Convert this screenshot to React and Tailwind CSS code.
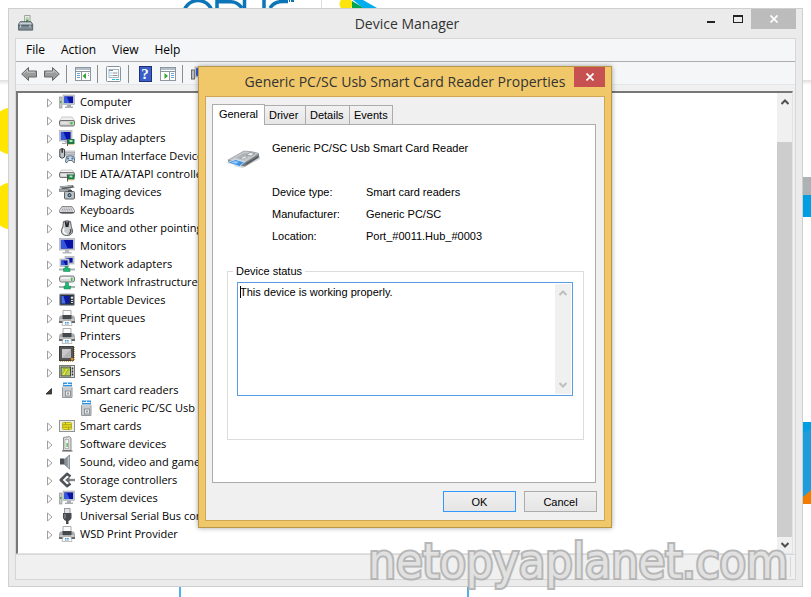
import React from "react";
import clsx from "clsx";

/* ---------- small 16x16 device icons ---------- */

function Icon({ children, className }) {
  return (
    <svg viewBox="0 0 16 16" className={clsx("h-4 w-4 shrink-0", className)} aria-hidden="true">
      {children}
    </svg>
  );
}

function Screen({ x, y, w, h }) {
  return (
    <g>
      <rect x={x} y={y} width={w} height={h} fill="#c9cdd1" stroke="#a2a6aa" strokeWidth="0.6" />
      <rect x={x + 1.4} y={y + 1.4} width={w - 2.8} height={h - 2.8} fill="#0712a6" />
      <path d={`M${x + 1.4} ${y + 1.4}h${w * 0.2}l${w * 0.25} ${h - 2.8}h-${w * 0.45}z`} fill="#3557dc" />
    </g>
  );
}

function Chip({ x, y }) {
  return (
    <g>
      <rect x={x} y={y} width="7" height="5" fill="#1c7a43" />
      <rect x={x + 2} y={y + 1} width="3" height="2" fill="#b5dfc2" />
      <path d={`M${x + 1} ${y + 5.5}h5`} stroke="#c9a22c" strokeDasharray="1 1" />
      <path d={`M${x} ${y}v7`} stroke="#555" />
    </g>
  );
}

function Computer() {
  return (
    <Icon>
      <rect x="0.5" y="3" width="2.5" height="11" fill="#c6c9cc" stroke="#85898d" strokeWidth="0.6" />
      <rect x="1" y="7" width="1.5" height="2" fill="#36b336" />
      <Screen x={4} y={1} w={11.5} h={9.5} />
      <path d="M8 11h4v1.5H8zM6 12.5h8V14H6z" fill="#a9adb1" />
    </Icon>
  );
}

function Disk() {
  return (
    <Icon>
      <path d="M3 5h10l2.5 4H0.5z" fill="#f0f0f0" stroke="#b0b0b0" strokeWidth="0.6" />
      <rect x="0.5" y="8.5" width="15" height="5.5" rx="1.5" fill="#cfcfcf" stroke="#6f6f6f" />
      <rect x="11.5" y="10" width="2" height="2.5" fill="#37c837" />
      <path d="M2 11h7" stroke="#f5f5f5" />
    </Icon>
  );
}

function Display() {
  return (
    <Icon>
      <Screen x={0.5} y={0.5} w={12.5} h={10.5} />
      <path d="M5 11h4v2H3v1h5" fill="#a9adb1" />
      <Chip x={8.5} y={9} />
    </Icon>
  );
}

function Hid() {
  return (
    <Icon>
      <rect x="6" y="3" width="10" height="5" fill="#d9dcdf" stroke="#a5a9ad" strokeWidth="0.6" />
      <path d="M6.5 4.7h9M6.5 6.3h9" stroke="#73777b" strokeDasharray="1 1" />
      <path d="M0.8 1.5q2.4-2 4.7 0v7.5q-2.3 2.5-4.7 0z" fill="#c3c6c9" stroke="#3f4347" />
      <path d="M3.2 0.8v4" stroke="#222" strokeWidth="1.4" />
      <path d="M7.5 8.5q3.8-1.5 7.5 0l1 5.5q-1.2 2-2.8-1.5h-3.7q-1.6 3.5-3 1.5z" fill="#c8d4de" stroke="#5d6e7e" />
      <circle cx="9" cy="10.5" r="1" fill="#2d6fb5" />
      <circle cx="13.4" cy="10.5" r="1" fill="#2d6fb5" />
    </Icon>
  );
}

function Ide() {
  return (
    <Icon>
      <path d="M2.5 4h10.5l2.5 3H0.5z" fill="#f4f4f4" stroke="#b0b0b0" strokeWidth="0.6" />
      <rect x="0.5" y="6.5" width="15" height="5" rx="1.5" fill="#cfcfcf" stroke="#777" />
      <path d="M2 9h5" stroke="#fff" />
      <Chip x={8.5} y={8.5} />
    </Icon>
  );
}

function Imaging() {
  return (
    <Icon>
      <path d="M0.5 2.5l13-1.5 2 2.5-12 2z" fill="#5b6063" />
      <path d="M2 3.2l11-1.4" stroke="#bcc1c4" />
      <rect x="0.5" y="5" width="11" height="2.5" fill="#a7acb0" stroke="#666a6e" strokeWidth="0.6" />
      <rect x="5.5" y="7.5" width="10" height="7.5" rx="1" fill="#b4babf" stroke="#5b6165" />
      <rect x="9" y="6" width="4" height="2" fill="#4b5054" />
      <circle cx="10.5" cy="11.2" r="2.6" fill="#34434f" stroke="#eceff1" strokeWidth="0.8" />
      <circle cx="10.5" cy="11.2" r="1" fill="#6eb4e0" />
    </Icon>
  );
}

function Keyboard() {
  return (
    <Icon>
      <path d="M3 4.5h10l2.5 4v1.5q-1 1.5-2 1.5H2.5q-1 0-2-1.5V8.5z" fill="#e0e0e3" stroke="#8b8b90" />
      <path d="M1 10h14v1H1z" fill="#55555c" />
      <path d="M3.5 6h9.5M3 7.5h10.5M2.5 9h11.5" stroke="#84848c" strokeDasharray="1 0.8" strokeWidth="0.8" />
    </Icon>
  );
}

function Mouse() {
  return (
    <Icon>
      <path d="M4.5 1.5q0 5-2.2 9q0 5 5.5 5t5.9-4.5q-1.7-4-2.2-9.5q-3.5-1.5-7 0z" fill="#c9cccf" stroke="#5f6367" />
      <path d="M6.5 1.5l1 5.5M9.5 1.5l-1 5.5" stroke="#25282b" strokeWidth="1.8" />
      <path d="M5 8q-2 5 2.5 6" stroke="#fff" strokeWidth="1.5" fill="none" />
      <path d="M11.5 9q1 3-1.5 5" stroke="#53575b" strokeWidth="1.5" fill="none" />
    </Icon>
  );
}

function MonitorIcon() {
  return (
    <Icon>
      <Screen x={0.5} y={0.5} w={15} h={11.5} />
      <path d="M6 12h4v2h2.5v1.5h-9V14H6z" fill="#b3b7ba" />
    </Icon>
  );
}

function NetworkAdapter() {
  return (
    <Icon>
      <Screen x={6} y={0.5} w={9} h={7.5} />
      <Screen x={1} y={3} w={9} h={7.5} />
      <path d="M0 13.5h16" stroke="#aab4b0" strokeWidth="2" />
      <path d="M6 10.5h3v2h2v3H4.5v-3H6z" fill="#21b573" stroke="#12814f" strokeWidth="0.5" />
    </Icon>
  );
}

function NetworkDrive() {
  return (
    <Icon>
      <rect x="0.5" y="2" width="15" height="6" rx="2" fill="#d3d6d6" stroke="#777b7b" />
      <path d="M2 4h9" stroke="#fafafa" strokeWidth="1.5" />
      <rect x="12" y="4" width="1.5" height="3" fill="#37c837" />
      <path d="M0 13h16" stroke="#aab4b0" strokeWidth="2" />
      <path d="M6.5 8.5h3V12h2v3H5v-3h1.5z" fill="#21b573" stroke="#12814f" strokeWidth="0.5" />
    </Icon>
  );
}

function Portable() {
  return (
    <Icon>
      <rect x="0.5" y="2" width="15" height="11.5" rx="1" fill="#606b76" stroke="#a0a6ac" />
      <rect x="1.5" y="3" width="13" height="9.5" fill="#2b3036" />
      <rect x="2.5" y="4" width="8" height="7.5" fill="#0b1ba4" />
      <path d="M2.5 4h2l2 7.5h-4z" fill="#4a70e4" />
      <circle cx="13" cy="5.8" r="1.2" fill="#dfe4e8" />
      <path d="M12 8.5h2M12 10.5h2" stroke="#e3e7ea" />
    </Icon>
  );
}

function Printer() {
  return (
    <Icon>
      <path d="M4 0.5h8V6H4z" fill="#fbfbfb" stroke="#9a9a9a" strokeWidth="0.8" />
      <path d="M1.5 5.5h13q1.5 1 1.5 3v3H0v-3q0-2 1.5-3z" fill="#a9acaf" />
      <path d="M3.5 5h9v4h-9z" fill="#45494c" />
      <path d="M1 10h3M12 10h3" stroke="#e5e7e9" />
      <rect x="0" y="11" width="16" height="2" fill="#65696c" />
      <path d="M4 10.5h8l1 5H3z" fill="#fbfbfb" stroke="#9a9a9a" strokeWidth="0.6" />
      <path d="M6 12.5h4M6 14h4" stroke="#3c91c8" strokeDasharray="1.5 0.7" />
    </Icon>
  );
}

function Processor() {
  return (
    <Icon>
      <path d="M1 15.5h14M15.5 1v14" stroke="#d8a860" strokeDasharray="1 1" />
      <rect x="0.5" y="0.5" width="14" height="14" fill="#555" stroke="#3e3e3e" />
      <rect x="3" y="3" width="9" height="9" fill="#b4b4b4" />
      <path d="M3 3h9l-9 9z" fill="#c9c9c9" />
      <rect x="12" y="12" width="2.5" height="2.5" fill="#d98a22" />
    </Icon>
  );
}

function Sensor() {
  return (
    <Icon>
      <rect x="0.5" y="1.5" width="15" height="12" fill="#e2e4e0" stroke="#777b77" />
      <rect x="2" y="3" width="9.5" height="9" fill="#b9cf6c" stroke="#3f4634" />
      <path d="M3 10l3-3.5-1.5-2 6 0.5-2.5 2-2 4" fill="#f4f01e" stroke="#587f2d" strokeWidth="0.6" />
      <path d="M13.5 3.5v8" stroke="#333" strokeWidth="1.5" strokeDasharray="2 1" />
    </Icon>
  );
}

function CardReader() {
  return (
    <Icon>
      <rect x="4" y="0.5" width="9" height="5" fill="#2f93e0" />
      <path d="M4.5 2.5h8M8.5 0.5v2" stroke="#e7f4fd" />
      <path d="M3.5 5h9.5v10.5H3.5z" fill="#c7cace" stroke="#95999e" />
      <path d="M3.5 5h9.5" stroke="#f2f2f2" />
      <rect x="6.5" y="9" width="5" height="5" fill="#e6e8ea" stroke="#70757a" strokeWidth="0.7" />
      <path d="M9 10.5v2" stroke="#555" />
    </Icon>
  );
}

function SmartCard() {
  return (
    <Icon>
      <rect x="0.5" y="2.5" width="15" height="11" fill="#eceeea" stroke="#92968f" />
      <rect x="3.5" y="4.5" width="9" height="7" rx="1" fill="#f2e21b" stroke="#a5a116" strokeWidth="0.8" />
      <path d="M4 6.8h8M4 9.2h8M6.5 4.5v2M9.5 9.5v2" stroke="#8d8a16" strokeWidth="0.8" />
    </Icon>
  );
}

function SoftwareDevice() {
  return (
    <Icon>
      <path d="M4.5 1.5l6-1 1.5 1.5v12.5H4.5z" fill="#d9dbd9" stroke="#8c908c" />
      <path d="M6 3.5h3.5v9H6z" fill="#f4f5f4" stroke="#9ea29e" strokeWidth="0.7" />
      <rect x="7.5" y="7" width="1.2" height="4" fill="#37b337" />
      <path d="M3 15h10.5" stroke="#555" />
    </Icon>
  );
}

function Speaker() {
  return (
    <Icon>
      <rect x="1" y="4.5" width="4.5" height="6" fill="#4a5056" />
      <path d="M5.5 5.5L10.5 1v14L5.5 10.5z" fill="#8a9097" stroke="#6b7177" strokeWidth="0.7" />
      <path d="M9.5 2.5v11" stroke="#b5c4d0" strokeWidth="1.5" />
    </Icon>
  );
}

function Storage() {
  return (
    <Icon>
      <path d="M11.5 4.5L8 1.8L1.8 8L8 14.2l3.5-2.7" fill="none" stroke="#4e5256" strokeWidth="2.6" strokeLinejoin="round" />
      <path d="M16 8H8" fill="none" stroke="#85898d" strokeWidth="2.4" />
      <path d="M10.5 4.5v7L6 8z" fill="#6a6e72" />
    </Icon>
  );
}

function Usb() {
  return (
    <Icon>
      <rect x="5.5" y="0.5" width="5.5" height="5" fill="#e3e5e7" stroke="#95999d" />
      <path d="M4 5h8.5v5q-1 2.5-3 3v3H7v-3q-2-0.5-3-3z" fill="#46494d" />
      <path d="M6 6v4.5" stroke="#92969a" strokeWidth="1.2" />
    </Icon>
  );
}

const devices = [
  { name: "Computer", icon: Computer },
  { name: "Disk drives", icon: Disk },
  { name: "Display adapters", icon: Display },
  { name: "Human Interface Devices", icon: Hid },
  { name: "IDE ATA/ATAPI controllers", icon: Ide },
  { name: "Imaging devices", icon: Imaging },
  { name: "Keyboards", icon: Keyboard },
  { name: "Mice and other pointing devices", icon: Mouse },
  { name: "Monitors", icon: MonitorIcon },
  { name: "Network adapters", icon: NetworkAdapter },
  { name: "Network Infrastructure Devices", icon: NetworkDrive },
  { name: "Portable Devices", icon: Portable },
  { name: "Print queues", icon: Printer },
  { name: "Printers", icon: Printer },
  { name: "Processors", icon: Processor },
  { name: "Sensors", icon: Sensor },
  { name: "Smart card readers", icon: CardReader, open: true, child: "Generic PC/SC Usb Smart Card Reader" },
  { name: "Smart cards", icon: SmartCard },
  { name: "Software devices", icon: SoftwareDevice },
  { name: "Sound, video and game controllers", icon: Speaker },
  { name: "Storage controllers", icon: Storage },
  { name: "System devices", icon: Computer },
  { name: "Universal Serial Bus controllers", icon: Usb },
  { name: "WSD Print Provider", icon: Printer },
];

function DeviceRow({ device }) {
  const Glyph = device.icon;
  return (
    <li>
      <div className="flex h-[18px] items-center">
        <button className="mr-0.5 flex h-4 w-4 shrink-0 items-center justify-center pt-0.5" aria-label={device.name}>
          <svg viewBox="0 0 8 10" className="h-[10px] w-2" aria-hidden="true">
            {device.open ? (
              <path d="M6.5 2.5V8H1z" fill="#404040" stroke="#262626" strokeWidth="0.8" />
            ) : (
              <path d="M2.5 1l4.5 4L2.5 9z" fill="#fff" stroke="#a0a0a0" />
            )}
          </svg>
        </button>
        <Glyph />
        <span className="ml-[5px]">{device.name}</span>
      </div>
      {device.child && (
        <ul>
          <li className="flex h-[18px] items-center pl-[37px]">
            <Glyph />
            <span className="ml-[5px]">{device.child}</span>
          </li>
        </ul>
      )}
    </li>
  );
}

/* ---------- toolbar ---------- */

function ToolArrow({ flip }) {
  return (
    <svg viewBox="0 0 16 16" className={clsx("h-4 w-4", flip && "-scale-x-100")} aria-hidden="true">
      <path d="M0.7 8L7.5 1.5V5h8v6h-8v3.5z" fill="#9b9b9b" stroke="#666" />
      <path d="M2.5 7.7L6.5 4v2.2H14" stroke="#c9c9c9" fill="none" />
    </svg>
  );
}

function PanelIcon({ left }) {
  return (
    <Icon>
      <rect x="0.5" y="1.5" width="15" height="13" fill="#fff" stroke="#8e979f" />
      <path d="M1 3h14" stroke="#b3bfca" strokeWidth="2" />
      <path d={left ? "M1 5.5h14M6.5 6v8" : "M1 5.5h14M9.5 6v8"} stroke="#8c959e" />
      <path d={left ? "M2 7.5h3M2 9.5h3M2 11.5h3M13 7.5h1M13 9.5h1" : "M11 7.5h3M11 9.5h3M11 11.5h3"} stroke="#6fa3cf" />
      <path d={left ? "M11 7v6L7.5 10z" : "M4.5 7v6l3.5-3z"} fill="#35a335" />
    </Icon>
  );
}

function PropertiesIcon() {
  return (
    <Icon>
      <rect x="0.5" y="0.5" width="14" height="15" rx="1" fill="#fdfdfd" stroke="#8a929a" />
      <rect x="3" y="3.5" width="9.5" height="8" fill="#fff" stroke="#8fa6ba" strokeWidth="0.8" />
      <path d="M3 4.5h4" stroke="#7e93a6" />
      <path d="M4.5 7h1M4.5 9.5h1" stroke="#20a3c9" />
      <path d="M6.5 7h5M6.5 9.5h5" stroke="#8c959e" />
      <path d="M6 13.5h3M10 13.5h3" stroke="#22b8d8" />
    </Icon>
  );
}

function HelpIcon() {
  return (
    <span className="flex h-4 w-[13px] items-center justify-center border border-[#20307d] bg-[#3a5fc8] font-['Liberation_Serif',serif] text-[15px] leading-4 font-bold text-white">
      ?
    </span>
  );
}

function ScanIcon() {
  return (
    <Icon>
      <rect x="0.5" y="4" width="3" height="9" fill="#b9bdc1" stroke="#666" />
      <Screen x={4} y={1} w={12} h={10} />
    </Icon>
  );
}

function Separator() {
  return <span className="mr-px -ml-px h-[18px] w-px bg-[#8d8d8d]" />;
}

function ToolButton({ label, children }) {
  return (
    <button aria-label={label} className="flex h-4 w-4 shrink-0 items-center justify-center">
      {children}
    </button>
  );
}

function Chevron({ down, className }) {
  return (
    <svg viewBox="0 0 8 6" className={clsx("h-[6px] w-2", down && "rotate-180", className)} aria-hidden="true">
      <path d="M0.5 5L4 1.5L7.5 5" fill="none" stroke="currentColor" strokeWidth="2" />
    </svg>
  );
}

function CloseX() {
  return (
    <svg viewBox="0 0 8 8" className="h-2 w-2" aria-hidden="true">
      <path d="M0.5 0.5l7 7M7.5 0.5l-7 7" stroke="#fff" strokeWidth="1.7" />
    </svg>
  );
}

/* ---------- web page showing behind the windows ---------- */

function Backdrop() {
  return (
    <div className="absolute inset-0" aria-hidden="true">
      <div className="absolute inset-x-0 top-20 h-[5px] bg-linear-to-b from-[#dedede] to-white" />
      <div className="absolute top-[107px] left-[-10px] h-12 w-12 rounded-full bg-[#ffe600]" />
      <div className="absolute top-[182px] left-[-10px] h-12 w-12 rounded-full bg-[#ffe600]" />
      <svg viewBox="0 0 240 8" className="absolute top-0 left-[150px] h-2 w-60">
        <g fill="none" stroke="#0a76b8" strokeWidth="3.5">
          <circle cx="48" cy="15" r="14.5" />
          <path d="M67 8V1.8h14q6 0 11 6.2M94.5 0v8M114 0v8M120 8q4-6.5 13-6.5h5" />
        </g>
        <path d="M139 0h1v2h-1zM141 0h3v2h-3z" fill="#0a76b8" />
        <path d="M171.5 0v8" stroke="#dcdcdc" />
        <circle cx="196" cy="4" r="6.5" fill="#fbe50c" />
        <path d="M202 1l12 7h-12z" fill="#00a651" />
        <path d="M203 0h10l14 8h-14z" fill="#00aeef" />
      </svg>
      <div className="absolute top-[177px] right-0 h-[18px] w-2 bg-[#adb2b4]" />
      <div className="absolute top-[195px] right-0 h-[22px] w-2 bg-[#009fe3]" />
      <svg viewBox="0 0 8 82" className="absolute top-[422px] right-0 h-[82px] w-2">
        <path d="M0 0h8v82H0z" fill="#1e9cdc" />
        <path d="M0 0h8v7L0 11z" fill="#009fe3" />
        <path d="M0 75l8-7v14H0z" fill="#f07d00" />
      </svg>
      <div className="absolute bottom-0 left-[179px] h-[10px] w-0.5 bg-[#55aee8]" />
      <div className="absolute bottom-0 left-[467px] h-[10px] w-0.5 bg-[#55aee8]" />
    </div>
  );
}

/* ---------- Device Manager window ---------- */

function DeviceManager() {
  return (
    <section className="absolute top-2 right-2 bottom-[10px] left-2 flex flex-col border border-[#cfcfcf] bg-[#ebebeb] px-1.5 pb-1.5">
      <header className="flex h-[29px] shrink-0 items-start">
        <div className="flex flex-1 pt-1.5 pl-[3px]">
          <svg viewBox="0 0 18 18" className="h-4 w-4" aria-hidden="true">
            <path d="M7.5 0.5h6v8h-6z" fill="#f4f4f4" stroke="#8d9296" />
            <path d="M9 2h3v3H9z" fill="#b9d9a4" />
            <path d="M9 5h3v4H9z" fill="#5b9b50" />
            <path d="M2.5 7.5h12l2 3v6.5H0.5v-6.5z" fill="#7e8c96" stroke="#4f5b64" />
            <path d="M2 8.5h12.5l1 2H1.5z" fill="#c9d1d6" />
            <path d="M1 12h15" stroke="#47535c" />
            <path d="M3 11v3M13.5 11v3" stroke="#d8dee2" />
          </svg>
        </div>
        <h1 className="pt-[5px] text-sm text-[#333]">Device Manager</h1>
        <div className="flex flex-1 justify-end">
          <button aria-label="Minimize" className="flex h-5 w-[27px] items-center justify-center">
            <span className="mt-1.5 h-0.5 w-2 bg-[#222]" />
          </button>
          <button aria-label="Maximize" className="flex h-5 w-[27px] items-center justify-center">
            <span className="h-2 w-[10px] border border-t-2 border-[#222]" />
          </button>
          <button aria-label="Close" className="flex h-5 w-[45px] items-center justify-center bg-[#bcbcbc]">
            <CloseX />
          </button>
        </div>
      </header>

      <div className="flex min-h-0 flex-1 flex-col border border-[#d6d6d6] bg-[#f0f0f0]">
        <nav className="flex h-[23px] shrink-0 items-center gap-4 border-b border-[#adadad] bg-[#f5f6f7] pl-[10px] text-xs">
          <button>File</button>
          <button>Action</button>
          <button>View</button>
          <button>Help</button>
        </nav>

        <div className="flex h-[23px] shrink-0 items-center gap-[7px] border-b border-[#e3e5e8] bg-[#f5f6f7] pt-0.5 pl-[5px]">
          <ToolButton label="Back"><ToolArrow /></ToolButton>
          <ToolButton label="Forward"><ToolArrow flip /></ToolButton>
          <Separator />
          <ToolButton label="Show console tree"><PanelIcon left /></ToolButton>
          <Separator />
          <ToolButton label="Properties"><PropertiesIcon /></ToolButton>
          <Separator />
          <ToolButton label="Help"><HelpIcon /></ToolButton>
          <ToolButton label="Show action pane"><PanelIcon /></ToolButton>
          <Separator />
          <ToolButton label="Scan for hardware changes"><ScanIcon /></ToolButton>
        </div>

        <main className="mt-1.5 mr-0.5 flex min-h-0 flex-1 border-t-2 border-r border-b border-l-2 border-t-[#777] border-r-[#e3e3e3] border-b-[#e3e3e3] border-l-[#777] bg-white">
          <ul className="min-w-0 flex-1 overflow-hidden pl-[23px] leading-4 whitespace-nowrap">
            {devices.map((d) => (
              <DeviceRow key={d.name} device={d} />
            ))}
          </ul>
          <div className="flex w-[15px] flex-col bg-[#f0f0f0] text-[#505050]">
            <button aria-label="Scroll up" className="flex h-[49px] justify-center pt-1.5">
              <Chevron />
            </button>
            <div className="flex-1 bg-[#cdcdcd]" />
            <button aria-label="Scroll down" className="flex h-4 items-center justify-center">
              <Chevron down />
            </button>
          </div>
        </main>

        <footer className="flex h-[25px] shrink-0 items-center justify-end border-t border-[#d7d7d7] pr-1">
          <span className="h-5 w-px bg-[#d7d7d7]" />
        </footer>
      </div>
    </section>
  );
}

/* ---------- Properties dialog ---------- */

function ReaderImage() {
  return (
    <svg viewBox="0 0 34 20" className="h-5 w-[34px]" aria-hidden="true">
      <path d="M6 17l10 2 17-9v-3L20 13z" fill="#b7bbbe" opacity="0.6" />
      <path d="M1 11L17 2q8 0 15 2.5v4L18 17.5 1 14z" fill="#757b80" />
      <path d="M1 11L17 2q8 0 15 2.5L18 13.5z" fill="#c4c8cb" stroke="#9a9fa4" strokeWidth="0.6" />
      <path d="M9 9l8-5 4 1-8 5z" fill="#aeb3b7" />
      <path d="M19 6l4-2.5 5 1-4 2.5z" fill="#eef0f1" stroke="#7a7f84" strokeWidth="0.7" />
      <path d="M13 9.5l4-2.5 4 1-4 2z" fill="#dfe2e4" stroke="#8a8f94" strokeWidth="0.5" />
      <path d="M0.5 13.5l8-3 9 2.5-5 4.5z" fill="#3f92e6" stroke="#e5f0fa" strokeWidth="0.8" />
      <path d="M4 13.5l4-1.5 4 1-3 1.8z" fill="#9dcbf5" />
      <path d="M19 15l12-7" stroke="#4f5458" strokeWidth="1.2" />
    </svg>
  );
}

function PropertiesDialog() {
  const tab = "-ml-px h-5 border border-[#acacac] bg-linear-to-b from-[#f2f2f2] to-[#e6e6e6] px-1 text-left";
  return (
    <section
      role="dialog"
      aria-labelledby="dialog-title"
      className="absolute top-[66px] left-[198px] flex h-[462px] w-[414px] flex-col border border-[#b8964a] bg-[#f0c869] px-1.5 pb-1.5 shadow-[0_0_5px_rgba(0,0,0,0.35)]"
    >
      <header className="relative flex h-[29px] shrink-0 items-center justify-center">
        <h2 id="dialog-title" className="text-sm whitespace-nowrap text-[#333]">
          Generic PC/SC Usb Smart Card Reader Properties
        </h2>
        <button aria-label="Close dialog" className="absolute top-0 right-0 flex h-5 w-[31px] items-center justify-center bg-[#c75050]">
          <CloseX />
        </button>
      </header>

      <div className="flex min-h-0 flex-1 flex-col border border-[#cfa654] bg-[#f0f0f0] px-1.5 pt-[7px] pb-2 font-['Liberation_Sans',Arial,sans-serif] text-[11px] leading-[14px]">
        <div role="tablist" className="relative z-10 -mb-px flex items-end">
          <button role="tab" aria-selected="true" className="h-[21px] w-[53px] border border-b-0 border-[#acacac] bg-white pb-0.5">
            General
          </button>
          <button role="tab" className={clsx(tab, "w-[42px]")}>Driver</button>
          <button role="tab" className={clsx(tab, "w-[45px]")}>Details</button>
          <button role="tab" className={clsx(tab, "w-[44px]")}>Events</button>
        </div>

        <div role="tabpanel" className="mr-0.5 flex-1 border border-[#acacac] bg-white px-[11px] pt-4">
          <div className="flex gap-[11px] pl-[3px]">
            <div className="pt-2">
              <ReaderImage />
            </div>
            <div>
              <p>Generic PC/SC Usb Smart Card Reader</p>
              <dl className="mt-[30px] grid grid-cols-[94px_1fr] gap-y-2">
                <dt>Device type:</dt>
                <dd>Smart card readers</dd>
                <dt>Manufacturer:</dt>
                <dd>Generic PC/SC</dd>
                <dt>Location:</dt>
                <dd>Port_#0011.Hub_#0003</dd>
              </dl>
            </div>
          </div>

          <fieldset className="mt-[21px] ml-[3px] h-[176px] border border-[#dcdcdc] pr-[10px] pl-[9px]">
            <legend className="-ml-1 px-[3px]">
              <label htmlFor="status">Device status</label>
            </legend>
            <div className="relative mt-1 flex h-[114px] border border-[#569de5] bg-white p-px">
              <span className="absolute top-[3px] left-0.5 h-3 w-px bg-black" />
              <textarea
                id="status"
                readOnly
                className="min-w-0 flex-1 resize-none overflow-hidden pt-px pl-px outline-none"
                defaultValue="This device is working properly."
              />
              <div className="flex w-4 flex-col items-center justify-between bg-[#f0f0f0] py-1.5 text-[#bfbfbf]">
                <Chevron />
                <Chevron down />
              </div>
            </div>
          </fieldset>
        </div>

        <div className="mt-2 mr-px flex justify-end gap-2">
          <button className="h-[21px] w-[73px] border border-[#3399ff] bg-linear-to-b from-[#f0f0f0] to-[#e5e5e5]">OK</button>
          <button className="h-[21px] w-[73px] border border-[#acacac] bg-linear-to-b from-[#f0f0f0] to-[#e5e5e5]">Cancel</button>
        </div>
      </div>
    </section>
  );
}

export default function App() {
  return (
    <div className="relative h-screen w-full overflow-hidden bg-white font-['Open_Sans','Segoe_UI',sans-serif] text-[11px] text-black">
      <Backdrop />
      <DeviceManager />
      <PropertiesDialog />
      <p className="pointer-events-none absolute right-[23px] bottom-3 font-['DejaVu_Sans_Condensed','DejaVu_Sans',sans-serif] text-5xl leading-none whitespace-nowrap text-[#e0e0e0] opacity-90 [-webkit-text-stroke:4px_#b0b0b0] [paint-order:stroke_fill]">
        netopyaplanet.com
      </p>
    </div>
  );
}
